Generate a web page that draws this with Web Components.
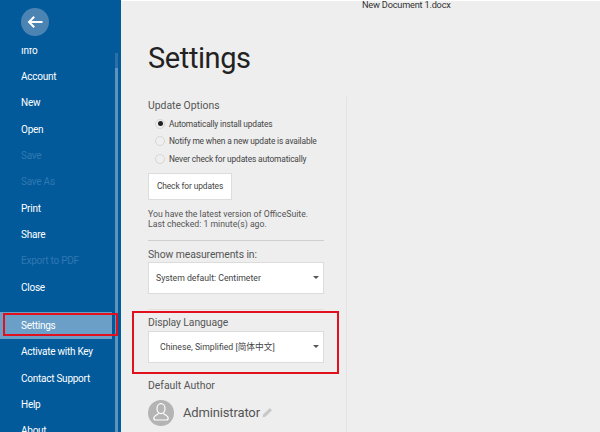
<!DOCTYPE html>
<html>
<head>
<meta charset="utf-8">
<title>Settings</title>
<style>
  html, body { margin: 0; height: 100%; overflow: hidden; }
  body { font-family: Roboto, "Noto Sans CJK SC", sans-serif; }
  app-shell { width: 600px; height: 432px; }
</style>
</head>
<body>
<app-shell>
  <nav-panel slot="nav">
    <nav-item>Info</nav-item>
    <nav-item>Account</nav-item>
    <nav-item>New</nav-item>
    <nav-item>Open</nav-item>
    <nav-item disabled>Save</nav-item>
    <nav-item disabled>Save As</nav-item>
    <nav-item>Print</nav-item>
    <nav-item>Share</nav-item>
    <nav-item disabled>Export to PDF</nav-item>
    <nav-item>Close</nav-item>
    <nav-item class="gap" selected>Settings</nav-item>
    <nav-item>Activate with Key</nav-item>
    <nav-item>Contact Support</nav-item>
    <nav-item>Help</nav-item>
    <nav-item>About</nav-item>
  </nav-panel>
  <settings-page slot="main"></settings-page>
</app-shell>

<script>
class AppShell extends HTMLElement {
  constructor() {
    super();
    this.attachShadow({ mode: 'open' });
    this.shadowRoot.innerHTML = `
      <style>
        :host { display: flex; position: relative; overflow: hidden; background: #eeeeee; }
        .top { position: absolute; left: 121px; right: 0; top: 0; height: 1px; background: #fff; }
      </style>
      <slot name="nav"></slot>
      <slot name="main"></slot>
      <div class="top"></div>
    `;
  }
}

class NavPanel extends HTMLElement {
  constructor() {
    super();
    this.attachShadow({ mode: 'open' });
    this.shadowRoot.innerHTML = `
      <style>
        :host { display: block; position: relative; width: 121px; height: 432px; flex: none; background: #025a9b; overflow: hidden; }
        .head { height: 48px; box-sizing: border-box; padding: 8px 0 0 21px; }
        .back { width: 28px; height: 28px; border-radius: 50%; background: #4b84b3; display: flex; align-items: center; justify-content: center; }
        .list { height: 384px; overflow: hidden; }
        .items { margin-top: -11px; }
        .track { position: absolute; left: 115px; top: 53px; bottom: 0; width: 3px; background: #2c6fa6; }
        .thumb { position: absolute; left: 115px; top: 68px; bottom: 0; width: 3px; background: #5c93bf; }
      </style>
      <div class="head">
        <div class="back">
          <svg width="16" height="12" viewBox="0 0 16 12" fill="none" stroke="#fff" stroke-width="2">
            <path d="M15.500 6H2M7.200 0.800 2 6l5.200 5.200"/>
          </svg>
        </div>
      </div>
      <div class="list"><div class="items"><slot></slot></div></div>
      <div class="track"></div>
      <div class="thumb"></div>
    `;
  }
}

class NavItem extends HTMLElement {
  constructor() {
    super();
    this.attachShadow({ mode: 'open' });
    this.shadowRoot.innerHTML = `
      <style>
        :host { display: flex; align-items: center; box-sizing: border-box; height: 26.35px; padding-left: 21px; font-size: 10px; letter-spacing: -0.25px; color: #fff; white-space: nowrap; }
        :host([disabled]) { color: #2f78b0; }
        :host([selected]) { position: relative; z-index: 1; width: 112px; background: #6c9fc7; }
        :host(.gap) { margin-top: 12px; }
        .mark { display: none; position: absolute; left: 3px; top: 1px; width: 115px; height: 23px; box-sizing: border-box; border: 2px solid #e0101c; }
        :host([selected]) .mark { display: block; }
      </style>
      <slot></slot>
      <div class="mark"></div>
    `;
  }
}

class RadioRow extends HTMLElement {
  constructor() {
    super();
    this.attachShadow({ mode: 'open' });
    this.shadowRoot.innerHTML = `
      <style>
        :host { display: flex; align-items: center; gap: 4px; height: 17.5px; padding-left: 7px; font-size: 8.4px; letter-spacing: -0.15px; color: #444; white-space: nowrap; }
        .dot { flex: none; box-sizing: border-box; width: 10px; height: 10px; border: 1px solid #d6d6d6; border-radius: 50%; background: #efefef; display: flex; align-items: center; justify-content: center; }
        .dot i { display: none; width: 5px; height: 5px; border-radius: 50%; background: #222; }
        :host([checked]) .dot i { display: block; }
      </style>
      <span class="dot"><i></i></span>
      <slot></slot>
    `;
  }
}

class DropSelect extends HTMLElement {
  constructor() {
    super();
    this.attachShadow({ mode: 'open' });
    this.shadowRoot.innerHTML = `
      <style>
        :host { display: flex; align-items: center; justify-content: space-between; box-sizing: border-box; width: 176px; height: 32px; padding: 0 4px 0 var(--indent, 7px); background: #fff; border: 1px solid #dcdcdc; font-size: 8.7px; color: #444; white-space: nowrap; }
        .arrow { width: 0; height: 0; border-left: 3.5px solid transparent; border-right: 3.5px solid transparent; border-top: 3.5px solid #555; }
      </style>
      <span><slot></slot></span>
      <span class="arrow"></span>
    `;
  }
}

class SettingsPage extends HTMLElement {
  constructor() {
    super();
    this.attachShadow({ mode: 'open' });
    this.shadowRoot.innerHTML = `
      <style>
        :host { display: block; position: relative; flex: 1; height: 432px; overflow: hidden; color: #444; }
        .doc { height: 9px; padding-left: 241px; font-size: 9.2px; letter-spacing: -0.2px; line-height: 9px; color: #333; white-space: nowrap; }
        h1 { margin: 0; padding: 29px 0 0 27px; height: 51px; font-size: 29px; letter-spacing: -0.4px; font-weight: 400; line-height: 40px; color: #222; }
        .cols { display: flex; padding-left: 27px; margin-top: 8px; }
        .col { width: 176px; flex: none; }
        .rule { margin-left: 22px; width: 1px; height: 340px; background: #e3e3e3; }
        .label { font-size: 10.4px; line-height: 16px; color: #555; white-space: nowrap; }
        .first { margin-top: 1px; }
        .radios { margin-top: 1px; }
        button { display: block; margin-top: 5px; width: 84px; height: 27px; padding: 0; background: #fff; border: 1px solid #dcdcdc; font: inherit; font-size: 8.4px; letter-spacing: -0.1px; color: #444; }
        p { margin: 9px 0 0; font-size: 8.7px; line-height: 10.5px; color: #555; white-space: nowrap; }
        hr { margin: 10px 0 0; border: 0; height: 1px; background: #cfcfcf; }
        .m { margin-top: 6px; letter-spacing: -0.1px; }
        .gap { margin-top: -1px; }
        .soft { margin-top: 15px; background: #e2e2e2; }
        .lang { position: relative; margin-top: 5px; }
        .lang .label { letter-spacing: -0.1px; }
        .mark { position: absolute; left: -16px; top: -4px; width: 207px; height: 63px; box-sizing: border-box; border: 2px solid #e0101c; }
        .lang drop-select { --indent: 11px; height: 32px; }
        .author { margin-top: 15px; }
        .who { display: flex; align-items: center; margin-top: 6px; font-size: 13px; letter-spacing: -0.15px; color: #555; }
        .who svg { margin-right: 9px; }
        .who .pen { margin: 0 0 0 2px; }
      </style>
      <div class="doc">New Document 1.docx</div>
      <h1>Settings</h1>
      <div class="cols">
        <div class="col">
          <div class="label first">Update Options</div>
          <div class="radios">
            <radio-row checked>Automatically install updates</radio-row>
            <radio-row>Notify me when a new update is available</radio-row>
            <radio-row>Never check for updates automatically</radio-row>
          </div>
          <button>Check for updates</button>
          <p>You have the latest version of OfficeSuite.<br>Last checked: 1 minute(s) ago.</p>
          <hr>
          <div class="label m">Show measurements in:</div>
          <drop-select class="gap">System default: Centimeter</drop-select>
          <hr class="soft">
          <div class="lang">
            <div class="mark"></div>
            <div class="label">Display Language</div>
            <drop-select>Chinese, Simplified [简体中文]</drop-select>
          </div>
          <div class="label author">Default Author</div>
          <div class="who">
            <svg width="26" height="26" viewBox="0 0 26 26">
              <circle cx="13" cy="13" r="13" fill="#b4b4b4"/>
              <g fill="none" stroke="#fff" stroke-width="1.2">
                <ellipse cx="13" cy="8.6" rx="4" ry="5"/>
                <path d="M10.600 13.200C9.800 15 5.800 15.600 5.800 18c0 1.300.7 2 1.800 2h10.800c1.100 0 1.800-.7 1.800-2 0-2.400-4-3-4.800-4.800"/>
              </g>
            </svg>
            <span>Administrator</span>
            <svg class="pen" width="11" height="11" viewBox="0 0 11 11">
              <path d="M0.500 10.500 1.200 7.600 7.800 1l2.200 2.200L3.400 9.800z" fill="#c8c8c8"/>
            </svg>
          </div>
        </div>
        <div class="rule"></div>
      </div>
    `;
  }
}

customElements.define('app-shell', AppShell);
customElements.define('nav-panel', NavPanel);
customElements.define('nav-item', NavItem);
customElements.define('radio-row', RadioRow);
customElements.define('drop-select', DropSelect);
customElements.define('settings-page', SettingsPage);
</script>
</body>
</html>
